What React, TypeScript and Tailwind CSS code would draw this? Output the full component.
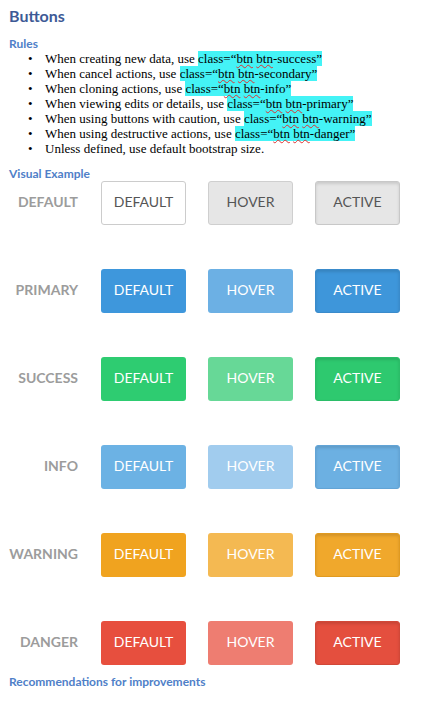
import React from "react";

type Variant = {
  label: string;
  base: string;
  hover: string;
  active: string;
};

const variants: Variant[] = [
  {
    label: "DEFAULT",
    base: "bg-white border border-[#cccccc] text-[#555555]",
    hover: "bg-[#e6e6e6] border border-[#cfcfcf] text-[#555555]",
    active:
      "bg-[#e6e6e6] border border-[#c8c8c8] text-[#555555] shadow-[inset_0_2px_3px_rgba(0,0,0,0.12)]",
  },
  {
    label: "PRIMARY",
    base: "bg-[#3e97dc] text-white",
    hover: "bg-[#6cb0e4] text-white",
    active:
      "bg-[#3e96da] text-white border border-[#3a8bcb] shadow-[inset_0_2px_3px_rgba(0,0,0,0.12)]",
  },
  {
    label: "SUCCESS",
    base: "bg-[#2ecc71] text-white",
    hover: "bg-[#67d897] text-white",
    active:
      "bg-[#2ec96f] text-white border border-[#2bbd68] shadow-[inset_0_2px_3px_rgba(0,0,0,0.12)]",
  },
  {
    label: "INFO",
    base: "bg-[#6cb2e4] text-white",
    hover: "bg-[#a1ccee] text-white",
    active:
      "bg-[#6cb0e2] text-white border border-[#62a4d6] shadow-[inset_0_2px_3px_rgba(0,0,0,0.12)]",
  },
  {
    label: "WARNING",
    base: "bg-[#f0a31f] text-white",
    hover: "bg-[#f4b952] text-white",
    active:
      "bg-[#f0a82c] text-white border border-[#e09a20] shadow-[inset_0_2px_3px_rgba(0,0,0,0.12)]",
  },
  {
    label: "DANGER",
    base: "bg-[#e74f3e] text-white",
    hover: "bg-[#ee7d71] text-white",
    active:
      "bg-[#e44f3e] text-white border border-[#d14838] shadow-[inset_0_2px_3px_rgba(0,0,0,0.12)]",
  },
];

const sq =
  "relative underline decoration-wavy decoration-[#e03030] decoration-1 underline-offset-[1px]";

function Hl({ cls }: { cls: string }) {
  return (
    <span className="bg-[#44f3f6]">
      class=“<span className={sq}>btn</span> <span className={sq}>btn</span>-{cls}”
    </span>
  );
}

const rules: { text: string; cls?: string }[] = [
  { text: "When creating new data, use ", cls: "success" },
  { text: "When cancel actions, use ", cls: "secondary" },
  { text: "When cloning actions, use ", cls: "info" },
  { text: "When viewing edits or details, use ", cls: "primary" },
  { text: "When using buttons with caution, use ", cls: "warning" },
  { text: "When using destructive actions, use ", cls: "danger" },
  { text: "Unless defined, use default bootstrap size." },
];

function Btn({ cls, text }: { cls: string; text: string }) {
  return (
    <div
      className={`w-[85px] h-[44px] pb-[3px] rounded-[3px] flex items-center justify-center text-[14px] font-['Lato',sans-serif] ${cls}`}
    >
      {text}
    </div>
  );
}

export default function App() {
  return (
    <div className="w-[435px] h-[715px] bg-white pl-[9px] pt-[6px] font-['Lato',sans-serif] overflow-hidden">
      <div className="text-[16px] leading-[20px] font-bold text-[#3d5a96]">Buttons</div>
      <div className="mt-[11px] text-[12px] leading-[14px] font-bold text-[#4f80c8]">Rules</div>
      <ul className="font-['Liberation_Serif',serif] text-[13px] leading-[15px] text-black">
        {rules.map((r, i) => (
          <li key={i} className="flex items-center h-[15px]">
            <span className="w-[21px] pl-[19px] text-[13px] shrink-0">•</span>
            <span className="pl-[15px] whitespace-nowrap">
              {r.text}
              {r.cls && <Hl cls={r.cls} />}
            </span>
          </li>
        ))}
      </ul>
      <div className="mt-[11px] text-[12px] leading-[14px] font-bold text-[#4f80c8]">Visual Example</div>
      <div className="flex flex-col gap-[44px] -ml-[9px]">
        {variants.map((v) => (
          <div key={v.label} className="flex items-center h-[44px]">
            <div className="w-[78px] pb-[3px] text-right text-[14px] font-bold text-[#9c9c9c]">{v.label}</div>
            <div className="ml-[23px] flex gap-[22px]">
              <Btn cls={v.base} text="DEFAULT" />
              <Btn cls={v.hover} text="HOVER" />
              <Btn cls={v.active} text="ACTIVE" />
            </div>
          </div>
        ))}
      </div>
      <div className="mt-[10px] text-[12px] leading-[14px] font-bold text-[#4f80c8]">
        Recommendations for improvements
      </div>
    </div>
  );
}
